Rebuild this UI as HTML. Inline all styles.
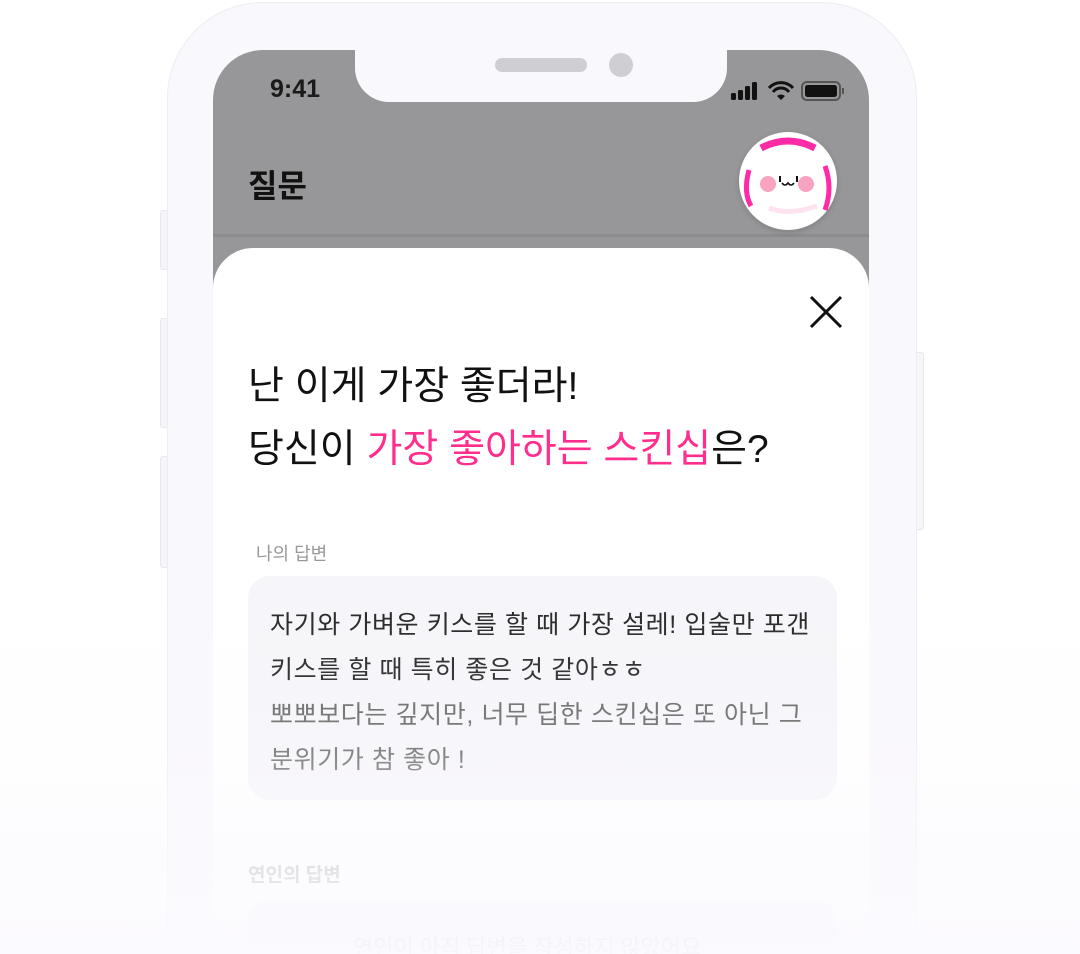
<!DOCTYPE html>
<html><head><meta charset="utf-8"><style>
*{margin:0;padding:0;box-sizing:border-box}
html,body{width:1080px;height:954px;overflow:hidden}
body{background:#fff;position:relative;font-family:"Liberation Sans","Noto Sans CJK KR",sans-serif}
.abs{position:absolute}
.frame{left:167px;top:2px;width:750px;height:952px;border-radius:96px 96px 0 0;background:#f9f8fc;border:1px solid #eeedf1;border-bottom:none}
.btn{background:#f6f5f9;border:1px solid #e8e7eb;border-radius:3px}
.screen{left:213px;top:50px;width:656px;height:904px;border-radius:50px 50px 0 0;background:#979698;overflow:hidden}
.notch{left:142px;top:-2px;width:372px;height:54px;background:#f9f8fc;border-radius:0 0 34px 34px}
.card{left:0;top:198px;width:656px;height:706px;background:#fff;border-radius:40px 40px 0 0;overflow:hidden}
.fade{left:0;top:560px;width:1080px;height:394px;background:linear-gradient(to bottom,rgba(251,250,254,0),rgba(251,250,254,0.15) 45%,rgba(251,250,254,0.75) 78%,rgba(251,250,254,0.95))}
</style></head><body>
<div class="abs btn" style="left:160px;top:210px;width:9px;height:60px"></div>
<div class="abs btn" style="left:160px;top:318px;width:9px;height:110px"></div>
<div class="abs btn" style="left:160px;top:456px;width:9px;height:112px"></div>
<div class="abs btn" style="left:915px;top:352px;width:9px;height:178px"></div>
<div class="abs frame"></div>
<div class="abs screen">
  <div class="abs notch"></div>
  <div class="abs" style="left:282px;top:8px;width:92px;height:14px;border-radius:7px;background:#cfced2"></div>
  <div class="abs" style="left:396px;top:3px;width:24px;height:24px;border-radius:50%;background:#cfced2"></div>
  <div class="abs" style="left:57px;top:25px;font-size:25px;font-weight:bold;color:#1a1a1a">9:41</div>
  <svg class="abs" style="left:516px;top:30px" width="120" height="22" viewBox="0 0 120 22">
    <rect x="2" y="13" width="5" height="7" rx="1.5" fill="#111"/><rect x="9" y="10" width="5" height="10" rx="1.5" fill="#111"/><rect x="16" y="6" width="5" height="14" rx="1.5" fill="#111"/><rect x="23" y="2" width="5" height="18" rx="1.5" fill="#111"/>
    <path d="M40 8 a16 16 0 0 1 24 0" stroke="#111" stroke-width="3" fill="none"/><path d="M44 12 a10 10 0 0 1 16 0" stroke="#111" stroke-width="3" fill="none"/><path d="M48 16 l4 4 l4 -4 a6 6 0 0 0 -8 0z" fill="#111"/>
    <rect x="73" y="2" width="38" height="18" rx="5" fill="none" stroke="#555" stroke-width="2"/><rect x="76" y="5" width="32" height="12" rx="2.5" fill="#111"/><rect x="113" y="8" width="2" height="6" fill="#555"/>
  </svg>
  <div class="abs" style="left:35px;top:111px;font-size:32px;font-weight:bold;color:#111">질문</div>
  <div class="abs" style="left:0;top:184px;width:656px;height:3px;background:#8c8b8d"></div>
  <div class="abs" style="left:526px;top:82px;width:98px;height:98px;border-radius:50%;background:#fff;box-shadow:0 2px 6px rgba(0,0,0,.15)">
    <svg width="98" height="98" viewBox="0 0 98 98">
      <path d="M22 16 Q49 2 76 16" stroke="#ff2aa6" stroke-width="7" fill="none"/>
      <path d="M10 38 Q4 60 12 74" stroke="#ff2aa6" stroke-width="5" fill="none"/>
      <path d="M86 34 Q94 56 86 78" stroke="#ff2aa6" stroke-width="5" fill="none"/>
      <circle cx="29" cy="52" r="8" fill="#f9a3c3"/><circle cx="67" cy="52" r="8" fill="#f9a3c3"/>
      <rect x="40" y="44" width="2" height="6" fill="#111"/><rect x="57" y="44" width="2" height="6" fill="#111"/>
      <path d="M43 51 q3 4 6 0 q3 4 6 0" stroke="#111" stroke-width="1.6" fill="none"/>
      <path d="M30 76 Q50 84 78 74" stroke="#fde3ef" stroke-width="5" fill="none"/>
    </svg>
  </div>
  <div class="abs card">
    <svg class="abs" style="left:596px;top:47px" width="34" height="34" viewBox="0 0 34 34"><path d="M2 2L32 32M32 2L2 32" stroke="#111" stroke-width="3"/></svg>
    <div class="abs" style="left:35px;top:107px;font-size:39px;line-height:63px;color:#111;white-space:nowrap">난 이게 가장 좋더라!<br>당신이 <span style="color:#ff2d8c">가장 좋아하는 스킨십</span>은?</div>
    <div class="abs" style="left:43px;top:292px;font-size:18px;color:#999">나의 답변</div>
    <div class="abs" style="left:35px;top:328px;width:589px;height:224px;border-radius:22px;background:#f6f5f9"></div>
    <div class="abs" style="left:57px;top:355px;font-size:25px;line-height:45px;color:#222;white-space:nowrap;letter-spacing:0.6px">자기와 가벼운 키스를 할 때 가장 설레! 입술만 포갠<br>키스를 할 때 특히 좋은 것 같아ㅎㅎ<br><span style="color:#666">뽀뽀보다는 깊지만, 너무 딥한 스킨십은 또 아닌 그<br>분위기가 참 좋아 !</span></div>
    <div class="abs" style="left:35px;top:612px;font-size:19px;font-weight:bold;color:#999">연인의 답변</div>
    <div class="abs" style="left:35px;top:652px;width:589px;height:200px;border-radius:22px;background:#f6f5f9"></div>
    <div class="abs" style="left:140px;top:682px;font-size:22px;color:#aaa">연인이 아직 답변을 작성하지 않았어요</div>
  </div>
</div>
<div class="abs fade"></div>
</body></html>
